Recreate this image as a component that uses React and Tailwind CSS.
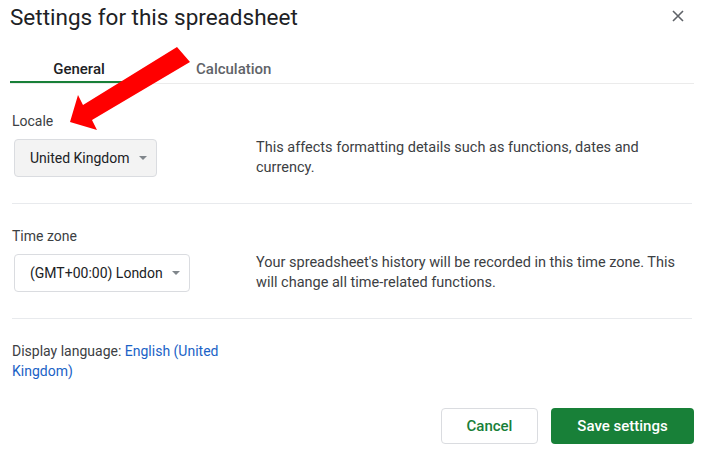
import React from "react";

const Caret = () => (
  <svg width="8" height="4" viewBox="0 0 8 4" className="ml-[9px] shrink-0">
    <path d="M0 0h8L4 4z" fill="#80868b" />
  </svg>
);

const Dropdown = ({ label, filled }) => (
  <div
    className={
      "ml-[2px] inline-flex h-[38px] items-center rounded-[4px] border border-[#dadce0] pl-[15px] pr-[9px] text-[14px] text-[#202124] " +
      (filled ? "bg-[#f3f3f3]" : "bg-white")
    }
  >
    <span>{label}</span>
    <Caret />
  </div>
);

const Section = ({ title, value, filled, text }) => (
  <div className="mx-[12px] border-b border-[#e8eaed] pb-[25px]">
    <div className="text-[14px] leading-[20px] text-[#3c4043]">{title}</div>
    <div className="mt-[7px] flex items-center">
      <div className="w-[244px] shrink-0">
        <Dropdown label={value} filled={filled} />
      </div>
      <p className="w-[420px] text-[14.5px] leading-[20px] text-[#3c4043]">{text}</p>
    </div>
  </div>
);

export default function App() {
  return (
    <div className="relative h-[454px] w-[704px] overflow-hidden bg-white font-['Roboto',sans-serif]">
      <div className="flex h-[32px] items-start justify-between pl-[10px] pr-[20px] pt-[3px]">
        <h1 className="text-[22.5px] leading-[28px] text-[#202124]">Settings for this spreadsheet</h1>
        <svg width="12" height="12" viewBox="0 0 12 12" className="mt-[7px]">
          <path d="M1 1l10 10M11 1L1 11" stroke="#5f6368" strokeWidth="1.6" />
        </svg>
      </div>

      <div className="mx-[10px] flex border-b border-[#ebebeb] pt-[27px] text-[15px] font-medium leading-[20px]">
        <div className="w-[138px] border-b-2 border-[#188038] pb-[2px] text-center text-[#202124]">General</div>
        <div className="pl-[48px] text-[#5f6368]">Calculation</div>
      </div>

      <div className="pt-[27px]">
        <Section
          title="Locale"
          value="United Kingdom"
          filled
          text="This affects formatting details such as functions, dates and currency."
        />
      </div>
      <div className="pt-[22px]">
        <Section
          title="Time zone"
          value="(GMT+00:00) London"
          text="Your spreadsheet's history will be recorded in this time zone. This will change all time-related functions."
        />
      </div>

      <div className="px-[12px] pt-[22px]">
        <p className="w-[240px] text-[14px] leading-[20px] text-[#3c4043]">
          Display language: <span className="text-[#1a62c6]">English (United Kingdom)</span>
        </p>
      </div>

      <div className="mt-[27px] flex justify-end gap-[13px] pr-[10px]">
        <button className="h-[36px] w-[97px] rounded-[4px] border border-[#dadce0] bg-white text-[15px] font-medium text-[#188038]">
          Cancel
        </button>
        <button className="h-[36px] w-[143px] rounded-[4px] bg-[#188038] text-[15px] font-medium text-white">
          Save settings
        </button>
      </div>

      <svg className="pointer-events-none absolute left-0 top-0" width="704" height="454">
        <polygon points="177,47 190,62 92,120 97,130 70,122 78,95 83,105" fill="#ff0000" />
      </svg>
    </div>
  );
}
